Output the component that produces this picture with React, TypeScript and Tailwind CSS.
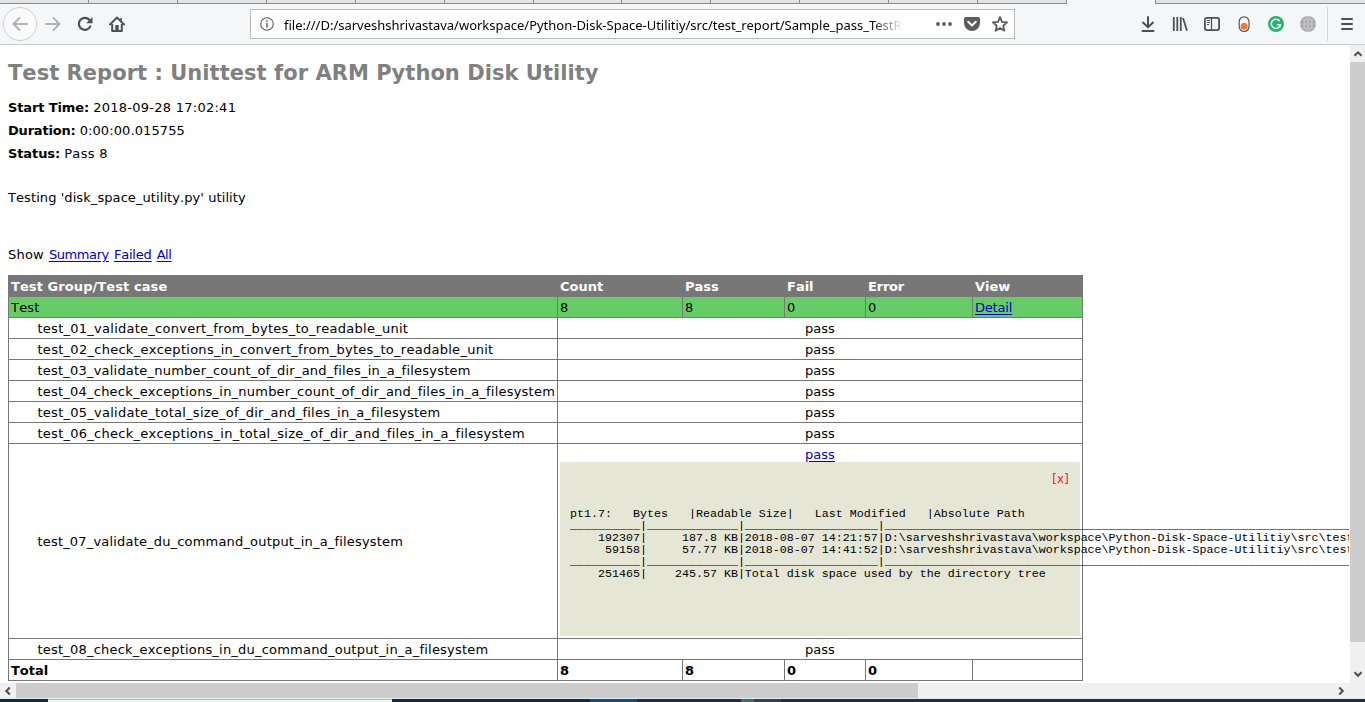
import type { ReactNode } from "react";

const tabWidths = [89, 89, 89, 89, 89, 89, 88, 89, 89, 89, 89, 89];

const cases: { name: string; fit: string }[] = [
  { name: "test_01_validate_convert_from_bytes_to_readable_unit", fit: "tracking-[0.26px]" },
  { name: "test_02_check_exceptions_in_convert_from_bytes_to_readable_unit", fit: "tracking-[0.275px]" },
  { name: "test_03_validate_number_count_of_dir_and_files_in_a_filesystem", fit: "tracking-[0.21px]" },
  { name: "test_04_check_exceptions_in_number_count_of_dir_and_files_in_a_filesystem", fit: "tracking-[0.22px]" },
  { name: "test_05_validate_total_size_of_dir_and_files_in_a_filesystem", fit: "tracking-[0.258px]" },
  { name: "test_06_check_exceptions_in_total_size_of_dir_and_files_in_a_filesystem", fit: "tracking-[0.26px]" },
];

const rule =
  "_".repeat(10) + "|" + "_".repeat(13) + "|" + "_".repeat(19) + "|" + "_".repeat(90);
const base = "D:\\sarveshshrivastava\\workspace\\Python-Disk-Space-Utilitiy\\src\\test_report\\";

const output = [
  "pt1.7:   Bytes   |Readable Size|   Last Modified   |Absolute Path",
  rule,
  "    192307|     187.8 KB|2018-08-07 14:21:57|" + base,
  "     59158|     57.77 KB|2018-08-07 14:41:52|" + base,
  rule,
  "    251465|    245.57 KB|Total disk space used by the directory tree",
];

function Link({ children, fit = "" }: { children: ReactNode; fit?: string }) {
  return (
    <a href="#" className={`text-[#0000c8] underline underline-offset-2 ${fit}`}>
      {children}
    </a>
  );
}

function TabStrip() {
  return (
    <div className="flex h-1 shrink-0">
      {tabWidths.map((w, i) => (
        <div
          key={i}
          style={{ width: w }}
          className="shrink-0 border-r border-b border-[#8b8c8f] bg-[#e2e3e5]"
        />
      ))}
      <div className="w-[88px] shrink-0 bg-[#f5f6f8]" />
      <div className="flex-1 border-b border-l border-[#8b8c8f] bg-[#e2e3e5]" />
    </div>
  );
}

function Toolbar() {
  return (
    <div className="flex h-[41px] shrink-0 items-center border-b border-[#cacbce] bg-[#f5f6f8]">
      <div className="ml-[3px] flex size-[34px] items-center justify-center rounded-full border border-[#d0d0d1] bg-[#fafafb]">
        <svg width="16" height="16" viewBox="0 0 16 16" fill="none" stroke="#b2b2b4" strokeWidth="1.8" strokeLinecap="round" strokeLinejoin="round">
          <path d="M15 8H1.5M7.5 2 1.5 8l6 6" />
        </svg>
      </div>
      <svg className="ml-2" width="16" height="16" viewBox="0 0 16 16" fill="none" stroke="#b2b2b4" strokeWidth="1.8" strokeLinecap="round" strokeLinejoin="round">
        <path d="M1 8h13.5M8.5 2l6 6-6 6" />
      </svg>
      <svg className="ml-4" width="16" height="16" viewBox="0 0 16 16" fill="none">
        <path d="M13.3 10.4A6 6 0 1 1 12.3 3.8" stroke="#505053" strokeWidth="2.2" strokeLinecap="round" />
        <path d="M15.5 1v6.3H9.2z" fill="#505053" />
      </svg>
      <svg className="ml-4" width="16" height="16" viewBox="0 0 16 16" fill="none" stroke="#505053">
        <path d="M1 8.5 8 1.5l7 7" strokeWidth="2" strokeLinecap="round" strokeLinejoin="round" />
        <path d="M3.2 8v7h9.6V8" strokeWidth="2" strokeLinejoin="round" />
        <path d="M7 14V9.700h2V14" strokeWidth="1.4" fill="#505053" />
        <path d="M12 2v3" strokeWidth="1.6" />
      </svg>

      <div className="ml-[125px] flex h-[30px] w-[765px] shrink-0 items-center border border-[#b9babc] bg-white">
        <svg className="ml-[9px] shrink-0" width="14" height="14" viewBox="0 0 14 14" fill="none" stroke="#5c5c5e">
          <circle cx="7" cy="7" r="6.3" strokeWidth="1.1" />
          <path d="M7 6v4.5M7 3.2v1.6" strokeWidth="1.5" />
        </svg>
        <div className="ml-2.5 w-[620px] overflow-hidden pt-px font-['Noto_Sans',sans-serif] text-[13px] leading-5 tracking-[-0.01px] whitespace-nowrap text-black [mask-image:linear-gradient(to_right,black_587px,transparent_619px)]">
          file:///D:/sarveshshrivastava/workspace/Python-Disk-Space-Utilitiy/src/test_report/Sample_pass_TestR
        </div>
        <svg className="ml-8 shrink-0" width="16" height="16" viewBox="0 0 16 16" fill="#5c5c5e">
          <circle cx="2" cy="8" r="1.9" />
          <circle cx="8" cy="8" r="1.9" />
          <circle cx="14" cy="8" r="1.9" />
        </svg>
        <svg className="ml-3 shrink-0" width="16" height="16" viewBox="0 0 16 16">
          <path d="M1.8 1h12.4A1.8 1.8 0 0 1 16 2.8V7a8 8 0 0 1-16 0V2.8A1.8 1.8 0 0 1 1.8 1Z" fill="#5c5c5e" />
          <path d="m4.2 5.8 3.8 3.7 3.8-3.7" fill="none" stroke="#fff" strokeWidth="2" strokeLinecap="round" strokeLinejoin="round" />
        </svg>
        <svg className="ml-3 shrink-0" width="16" height="16" viewBox="0 0 16 16" fill="none" stroke="#5c5c5e" strokeWidth="1.8" strokeLinejoin="round">
          <path d="m8 1.200 2 4.700 5.100.4-3.900 3.400 1.200 5L8 12l-4.400 2.700 1.200-5L.9 6.300 6 5.900Z" />
        </svg>
      </div>

      <div className="ml-[125px] flex items-center gap-4">
        <svg width="16" height="16" viewBox="0 0 16 16" fill="none" stroke="#505053" strokeWidth="2" strokeLinecap="round" strokeLinejoin="round">
          <path d="M8 1v10M3 6.500 8 11.300l5-4.800M2.500 15h11" />
        </svg>
        <svg width="16" height="16" viewBox="0 0 16 16" fill="none" stroke="#505053">
          <path d="M1.8 1v14M5.3 1v14M8.8 1v14M11 2l4 12.8" strokeWidth="1.8" />
        </svg>
        <svg width="16" height="16" viewBox="0 0 16 16" fill="none" stroke="#505053">
          <rect x=".9" y="1.900" width="14.200" height="12.200" rx="2" strokeWidth="1.800" />
          <path d="M7.500 2v12" strokeWidth="1.300" />
          <path d="M3 4.500h3M3 6.500h3M3 8.500h2" strokeWidth="1" />
        </svg>
        <svg width="16" height="16" viewBox="0 0 16 16">
          <rect x="3.200" y=".8" width="9.800" height="14.600" rx="4.800" fill="#fff" stroke="#55555a" strokeWidth="1.200" />
          <circle cx="8.100" cy="10.300" r="3.500" fill="#f0792c" />
        </svg>
        <svg width="16" height="16" viewBox="0 0 16 16">
          <circle cx="8" cy="8" r="8" fill="#22b573" />
          <path d="M11.600 5A4.600 4.600 0 1 0 12.400 8.800H8.900M11.900 9v2.500" fill="none" stroke="#fff" strokeWidth="1.500" />
        </svg>
        <svg width="16" height="16" viewBox="0 0 16 16">
          <circle cx="8" cy="8" r="8" fill="#aaaaac" />
          <path d="M8 0v16M0 8h16M1.500 4h13M1.500 12h13M8 0c-5 4-5 12 0 16M8 0c5 4 5 12 0 16" fill="none" stroke="#c9c9cb" strokeWidth=".9" />
        </svg>
      </div>
      <div className="ml-[11px] h-[34px] w-px bg-[#d4d5d7]" />
      <svg className="ml-3" width="14" height="14" viewBox="0 0 14 14" stroke="#505053" strokeWidth="2" strokeLinecap="round">
        <path d="M2 2h10M2 7h10M2 12h10" />
      </svg>
    </div>
  );
}

function Cell({ children, className = "" }: { children?: ReactNode; className?: string }) {
  return <div className={`h-5 px-0.5 ${className}`}>{children}</div>;
}

function CaseRow({ name, fit }: { name: string; fit: string }) {
  return (
    <>
      <Cell className={`bg-white pl-[28.5px] ${fit}`}>{name}</Cell>
      <Cell className="col-span-5 bg-white text-center">pass</Cell>
    </>
  );
}

function ResultTable() {
  return (
    <div className="mt-[9px] grid w-[1075px] grid-cols-[548px_124px_101px_80px_106px_109px] gap-px bg-[#777777] p-px leading-[22px] whitespace-nowrap">
      <Cell className="font-bold tracking-[0.08px] text-white">Test Group/Test case</Cell>
      <Cell className="font-bold text-white">Count</Cell>
      <Cell className="font-bold text-white">Pass</Cell>
      <Cell className="font-bold text-white">Fail</Cell>
      <Cell className="font-bold tracking-[-0.2px] text-white">Error</Cell>
      <Cell className="font-bold text-white">View</Cell>

      <Cell className="bg-[#66cc66] tracking-[0.2px]">Test</Cell>
      <Cell className="bg-[#66cc66]">8</Cell>
      <Cell className="bg-[#66cc66]">8</Cell>
      <Cell className="bg-[#66cc66]">0</Cell>
      <Cell className="bg-[#66cc66]">0</Cell>
      <Cell className="bg-[#66cc66]">
        <Link fit="tracking-[-0.2px]">Detail</Link>
      </Cell>

      {cases.map((c) => (
        <CaseRow key={c.name} {...c} />
      ))}

      <div className="flex h-[194px] items-center bg-white pt-0.5 pl-[28.5px] tracking-[0.18px]">
        test_07_validate_du_command_output_in_a_filesystem
      </div>
      <div className="col-span-5 h-[194px] min-w-0 bg-white px-0.5 text-center">
        <div className="h-[18px]">
          <Link>pass</Link>
        </div>
        <div className="h-[174px] bg-[#e6e6d6] p-2.5 text-left">
          <div className="pr-px text-right text-[11.5px] leading-[14px] tracking-[0.3px] text-[#f0142d]">[x]</div>
          <pre className="pt-[22px] font-['Liberation_Mono',monospace] text-[11.67px] leading-3">
            {output.join("\n")}
          </pre>
        </div>
      </div>

      <CaseRow name="test_08_check_exceptions_in_du_command_output_in_a_filesystem" fit="tracking-[0.21px]" />

      <Cell className="bg-white font-bold">Total</Cell>
      <Cell className="bg-white font-bold">8</Cell>
      <Cell className="bg-white font-bold">8</Cell>
      <Cell className="bg-white font-bold">0</Cell>
      <Cell className="bg-white font-bold">0</Cell>
      <Cell className="bg-white" />
    </div>
  );
}

function Report() {
  return (
    <main className="mr-px min-w-0 flex-1 overflow-hidden bg-white pt-px pl-2 font-['DejaVu_Sans',sans-serif] text-[13px] text-black [font-kerning:none]">
      <h1 className="mt-[13px] text-[21px] leading-7 font-bold tracking-[0.04px] text-[#808080]">
        Test Report : Unittest for ARM Python Disk Utility
      </h1>
      <p className="mt-[9px] leading-[23px]">
        <strong className="tracking-[-0.126px]">Start Time:</strong>{" "}
        <span className="tracking-[0.26px]">2018-09-28 17:02:41</span>
      </p>
      <p className="leading-[23px]">
        <strong className="tracking-[-0.2px]">Duration:</strong>{" "}
        <span className="tracking-[0.1px]">0:00:00.015755</span>
      </p>
      <p className="leading-[23px]">
        <strong className="tracking-[-0.108px]">Status:</strong> <span className="tracking-[0.35px]">Pass 8</span>
      </p>
      <p className="mt-[22px] leading-[22px] tracking-[0.08px]">Testing 'disk_space_utility.py' utility</p>
      <p className="mt-[35px] flex gap-[5px] leading-[22px]">
        <span className="tracking-[0.2px]">Show</span>
        <Link fit="tracking-[-0.403px]">Summary</Link>
        <Link fit="tracking-[-0.2px]">Failed</Link>
        <Link fit="tracking-[-0.45px]">All</Link>
      </p>
      <ResultTable />
    </main>
  );
}

function Chevron({ d }: { d: string }) {
  return (
    <svg width="10" height="10" viewBox="0 0 10 10" fill="none" stroke="#505050" strokeWidth="2">
      <path d={d} />
    </svg>
  );
}

export default function App() {
  return (
    <div className="flex h-[702px] w-[1365px] flex-col overflow-hidden bg-white">
      <TabStrip />
      <Toolbar />
      <div className="flex h-[638px] shrink-0">
        <Report />
        <div className="flex w-[15px] flex-col items-center bg-[#f0f0f0]">
          <div className="flex h-[17px] items-center">
            <Chevron d="M1.5 6.8 5 3.3l3.5 3.5" />
          </div>
          <div className="h-[580px] w-full bg-[#cdcdcd]" />
          <div className="mt-[23px] flex h-[18px] items-center">
            <Chevron d="M1.5 3.3 5 6.8l3.5-3.5" />
          </div>
        </div>
      </div>
      <div className="flex h-[15px] shrink-0 items-center bg-[#f0f0f0]">
        <div className="flex w-4 justify-center">
          <Chevron d="M6.8 1.5 3.3 5l3.5 3.5" />
        </div>
        <div className="h-full w-[902px] bg-[#cdcdcd]" />
        <div className="ml-[418px] flex w-[10px] justify-center">
          <Chevron d="M3.3 1.5 6.8 5 3.3 8.5" />
        </div>
      </div>
      <div className="h-px shrink-0 bg-[#e3eaf0]" />
      <div className="flex h-[3px] shrink-0 bg-[#15324a]">
        <div className="w-12 bg-[#0c2c40]" />
        <div className="w-[344px] border-t border-[#b5bdc0] bg-[#f1f5f6]" />
        <div className="w-[198px] bg-[#0e2c40]" />
        <div className="w-[47px] bg-[#0c4f85]" />
        <div className="w-[104px] bg-[#16304a]" />
        <div className="w-[13px] bg-[#3c6e5c]" />
        <div className="w-[27px] bg-[#2b4359]" />
      </div>
    </div>
  );
}
